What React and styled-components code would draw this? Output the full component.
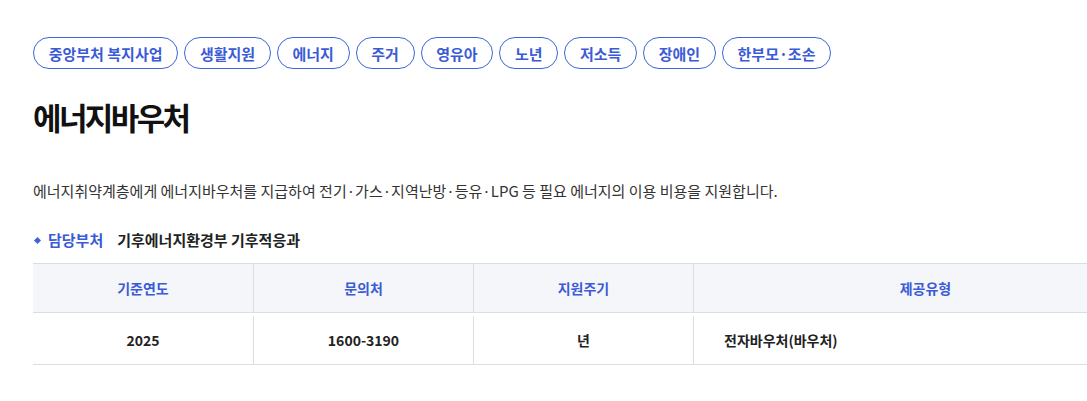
import React from "react";
import styled, { createGlobalStyle } from "styled-components";

const GlobalStyle = createGlobalStyle`
  html, body {
    margin: 0;
    padding: 0;
    background: #fff;
    overflow: hidden;
  }
  body {
    font-family: "Noto Sans CJK KR", "Noto Sans", sans-serif;
    color: #222;
  }
`;

const Page = styled.div`
  padding: 37px 0 0 33px;
  width: 1200px;
`;

const ChipRow = styled.div`
  display: flex;
  gap: 6px;
`;

const Chip = styled.button`
  height: 32px;
  padding: 0 14.7px;
  border: 1.5px solid #3e64d9;
  border-radius: 16px;
  background: #fff;
  color: #3b5bd6;
  font-family: inherit;
  font-size: 15px;
  font-weight: 700;
  letter-spacing: 0;
  cursor: pointer;
`;

const Title = styled.h1`
  margin: 26px 0 0;
  font-size: 31px;
  font-weight: 700;
  letter-spacing: -2.6px;
  line-height: 44px;
  color: #111;
`;

const Desc = styled.p`
  margin: 40px 0 0;
  font-size: 15px;
  line-height: 24px;
  letter-spacing: 0;
  color: #333;
`;

const Dept = styled.div`
  display: flex;
  align-items: center;
  margin-top: 25px;
  font-size: 15px;
  font-weight: 700;
  letter-spacing: 0;
  line-height: 24px;
`;

const Bullet = styled.span`
  width: 5px;
  height: 5px;
  margin: 0 8px 0 2px;
  background: #3e64d9;
  transform: rotate(45deg);
`;

const DeptLabel = styled.span`
  color: #3b5bd6;
  margin-right: 14px;
`;

const DeptName = styled.span`
  color: #222;
`;

const Table = styled.div`
  margin-top: 11px;
  width: 1124px;
  display: grid;
  grid-template-columns: 220px 220px 220px 1fr;
  border-top: 1px solid #dcdde2;
  border-bottom: 1px solid #dcdde2;
`;

const Head = styled.div`
  height: 48px;
  display: flex;
  align-items: center;
  justify-content: center;
  background: #f5f6fa;
  border-bottom: 1px solid #dcdde2;
  border-left: ${(p) => (p.$first ? "none" : "1px solid #dcdde2")};
  color: #3b5bd6;
  font-size: 14px;
  font-weight: 700;
`;

const Cell = styled.div`
  height: 48px;
  margin-top: 3px;
  display: flex;
  align-items: center;
  justify-content: ${(p) => (p.$left ? "flex-start" : "center")};
  padding-left: ${(p) => (p.$left ? "30px" : "0")};
  border-left: ${(p) => (p.$first ? "none" : "1px solid #dcdde2")};
  color: #222;
  font-size: 14px;
  font-weight: 700;
`;

const tags = ["중앙부처 복지사업", "생활지원", "에너지", "주거", "영유아", "노년", "저소득", "장애인", "한부모·조손"];
const heads = ["기준연도", "문의처", "지원주기", "제공유형"];

export default function App() {
  return (
    <>
      <GlobalStyle />
      <Page>
        <ChipRow>
          {tags.map((t) => (
            <Chip key={t}>{t}</Chip>
          ))}
        </ChipRow>
        <Title>에너지바우처</Title>
        <Desc>
          에너지취약계층에게 에너지바우처를 지급하여 전기·가스·지역난방·등유·LPG 등 필요 에너지의 이용 비용을 지원합니다.
        </Desc>
        <Dept>
          <Bullet />
          <DeptLabel>담당부처</DeptLabel>
          <DeptName>기후에너지환경부 기후적응과</DeptName>
        </Dept>
        <Table>
          {heads.map((h, i) => (
            <Head key={h} $first={i === 0}>{h}</Head>
          ))}
          <Cell $first>2025</Cell>
          <Cell>1600-3190</Cell>
          <Cell>년</Cell>
          <Cell $left>전자바우처(바우처)</Cell>
        </Table>
      </Page>
    </>
  );
}
